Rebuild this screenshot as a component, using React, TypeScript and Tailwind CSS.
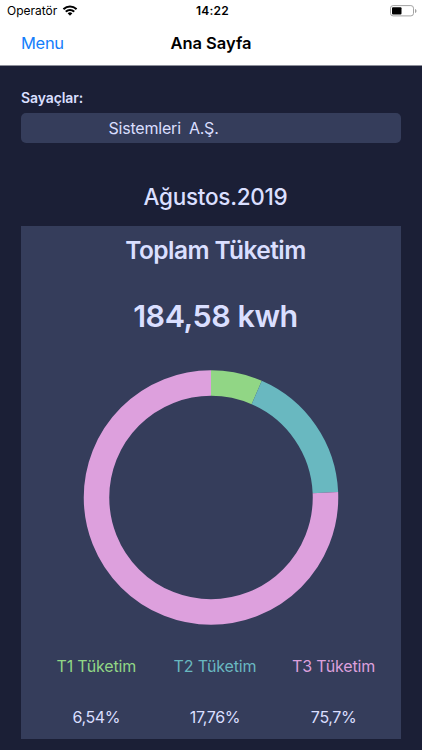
const readings = [
  { id: 'T1', label: 'T1 Tüketim', value: 6.54, text: '6,54%', stroke: '#91d685', color: 'text-[#91d685]' },
  { id: 'T2', label: 'T2 Tüketim', value: 17.76, text: '17,76%', stroke: '#69b8c0', color: 'text-[#69b8c0]' },
  { id: 'T3', label: 'T3 Tüketim', value: 75.7, text: '75,7%', stroke: '#dda0dd', color: 'text-[#dda0dd]' },
];

function WifiIcon() {
  return (
    <svg className="ml-[5px] h-[12px] w-[16px]" viewBox="0 0 15 11" fill="#000">
      <path d="M7.5 2.3c2 0 3.8.8 5.2 2.1.1.1.3.1.4 0l1-1c.1-.1.1-.3 0-.4a9.5 9.5 0 0 0-13.2 0c-.1.1-.1.3 0 .4l1 1c.1.1.3.1.4 0A7.5 7.5 0 0 1 7.5 2.3Z" />
      <path d="M7.5 5.6c1.1 0 2.2.4 3 1.1.1.1.3.1.4 0l1-1c.1-.1.1-.3 0-.4a6.4 6.4 0 0 0-8.8 0c-.1.1-.1.3 0 .4l1 1c.1.1.3.1.4 0a4.4 4.4 0 0 1 3-1.1Z" />
      <path d="M9.6 7.9c.1-.1.1-.3 0-.4a3.2 3.2 0 0 0-4.2 0c-.1.1-.1.3 0 .4l1.9 1.9c.1.1.3.1.4 0Z" />
    </svg>
  );
}

function BatteryIcon() {
  return (
    <svg className="mr-[5px] h-[12px] w-[27px]" viewBox="0 0 27 12">
      <rect x="0.5" y="0.6" width="23" height="10.3" rx="2.6" fill="none" stroke="#a3a3a3" />
      <rect x="2" y="2.2" width="9.5" height="7.2" rx="1" fill="#000" />
      <path d="M25 4v4c.9-.4 1.5-1.1 1.5-2S25.9 4.4 25 4Z" fill="#a3a3a3" />
    </svg>
  );
}

function Donut() {
  let start = 0;
  return (
    <svg className="mx-auto block h-[256px] w-[256px]" viewBox="-128 -128.5 256 256">
      <g transform="rotate(-90)" fill="none" strokeWidth="25.5">
        {readings.map((r) => {
          const offset = -start;
          start += r.value;
          return (
            <circle key={r.id} r="114.5" pathLength={100} stroke={r.stroke} strokeDasharray={`${r.value} ${100 - r.value}`} strokeDashoffset={offset} />
          );
        })}
      </g>
    </svg>
  );
}

export default function App() {
  return (
    <div className="flex h-[750px] w-[422px] flex-col overflow-hidden whitespace-nowrap bg-[#1b1f36] font-['Inter','Liberation_Sans',sans-serif] text-[#dadfff]">
      <header className="h-[66px] shrink-0 border-b border-[#8d8f9a] bg-white text-black">
        <div className="grid h-[22px] grid-cols-3 items-center text-[12px]">
          <div className="flex items-center pl-[7px]">
            <span>Operatör</span>
            <WifiIcon />
          </div>
          <span className="pl-[3px] text-center font-semibold tracking-[0.2px]">14:22</span>
          <div className="flex justify-end">
            <BatteryIcon />
          </div>
        </div>
        <nav className="grid h-[43px] grid-cols-3 items-center text-[16.5px]">
          <span className="pl-[21px] tracking-[-0.3px] text-[#147efb]">Menu</span>
          <span className="text-center font-semibold">Ana Sayfa</span>
        </nav>
      </header>

      <main className="flex flex-1 flex-col px-[21px]">
        <div className="mt-[22px] h-5 text-[14px] font-semibold leading-5 tracking-[-0.1px]">Sayaçlar:</div>
        <div className="mt-[4.5px] flex h-[30px] items-center rounded-[5px] bg-[#353d5b] pl-[87.5px] text-[16px] tracking-[-0.2px]">
          <span>Sistemleri</span>
          <span className="ml-[8px]">A.Ş.</span>
        </div>
        <h1 className="mt-[38px] h-8 pl-[2px] text-center text-[22.5px] font-medium leading-8 tracking-[-0.27px] [text-indent:7px]">Ağustos.2019</h1>

        <section className="mt-[13.5px] h-[513px] bg-[#353d5b]">
          <h2 className="h-[50px] pl-[9px] text-center text-[24.5px] font-semibold leading-[49px] tracking-[-0.55px]">Toplam Tüketim</h2>
          <div className="mt-[20px] h-10 pl-[9px] text-center text-[30.5px] font-semibold leading-10 tracking-[-0.45px]">184,58 kwh</div>
          <div className="mt-[33px]">
            <Donut />
          </div>
          <div className="mt-[29px] grid grid-cols-3 pl-[16px] pr-[8px] text-center text-[16px] leading-6 tracking-[-0.15px]">
            {readings.map((r) => (
              <div key={r.id} className="flex flex-col gap-[27px]">
                <span className={r.color}>{r.label}</span>
                <span className="tracking-[-0.35px]">{r.text}</span>
              </div>
            ))}
          </div>
        </section>
      </main>
    </div>
  );
}
